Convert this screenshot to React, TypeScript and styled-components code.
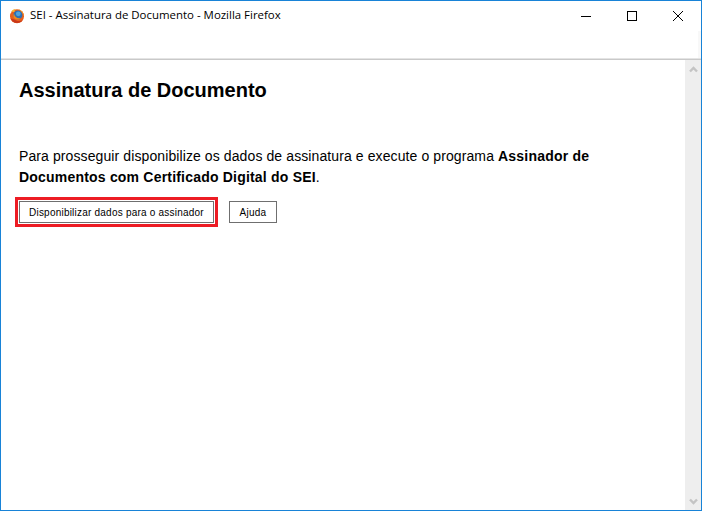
import React from "react";
import styled, { createGlobalStyle } from "styled-components";

const Global = createGlobalStyle`
  html, body { margin: 0; padding: 0; background: #fff; }
  #root { width: 702px; height: 511px; }
`;

const Win = styled.div`
  box-sizing: border-box;
  width: 702px;
  height: 511px;
  border: 1px solid #1883d7;
  display: flex;
  flex-direction: column;
  background: #fff;
  overflow: hidden;
`;

const TitleBar = styled.header`
  box-sizing: border-box;
  height: 59px;
  flex: none;
  display: flex;
  align-items: flex-start;
  border-bottom: 1px solid #c9c9c9;
  box-shadow: inset 0 -1px 0 #e4e4e4;
  background: linear-gradient(#f8f8f8, #f8f8f8) no-repeat right top 30px / 3px 27px;
`;

const TitleLabel = styled.div`
  display: flex;
  align-items: center;
  gap: 5px;
  padding: 7px 0 0 8px;
  flex: 1;
  font: 11.45px "Open Sans", "Noto Sans", sans-serif;
  color: #000;
  line-height: 16px;
`;

const TitleText = styled.span`
  margin-top: -2px;
`;

const WinButton = styled.div`
  width: 46px;
  height: 30px;
  display: flex;
  align-items: center;
  justify-content: center;
`;

const Body = styled.div`
  flex: 1;
  display: flex;
  min-height: 0;
`;

const Content = styled.main`
  flex: 1;
  padding: 17px 0 0 18px;
  font-family: "Liberation Sans", Arial, sans-serif;
  color: #000;
`;

const Heading = styled.h1`
  margin: 0;
  font-size: 20px;
  line-height: 26px;
  font-weight: 700;
`;

const Paragraph = styled.p`
  margin: 43px 0 0;
  width: 620px;
  font-size: 14px;
  line-height: 21px;
  letter-spacing: 0.1px;
`;

const Emphasis = styled.strong`
  letter-spacing: 0.2px;
`;

const Actions = styled.div`
  display: flex;
  align-items: center;
  gap: 11px;
  margin-top: 9px;
`;

const Highlight = styled.div`
  box-sizing: border-box;
  margin-left: -4px;
  border: 3px solid #ed1c24;
  padding: 1px;
  display: flex;
`;

const Button = styled.button`
  box-sizing: border-box;
  height: 22px;
  min-width: 48px;
  padding: 0 9px;
  background: #fff;
  border: 1px solid #6f6f6f;
  border-radius: 0;
  font: 10px "Liberation Sans", Arial, sans-serif;
  letter-spacing: 0.22px;
  color: #000;
`;

const Scrollbar = styled.aside`
  width: 16px;
  flex: none;
  background: #eeeeee;
  display: flex;
  flex-direction: column;
  justify-content: space-between;
  align-items: center;
  padding: 6px 0 5px;
  box-sizing: border-box;
`;

const Firefox = () => (
  <svg width="16" height="16" viewBox="0 0 16 16" aria-hidden="true">
    <circle cx="8" cy="8.2" r="7" fill="#e8601c" />
    <path d="M1.500 10.500C2.500 13.200 5 15 8 15c2.400 0 4.500-1.200 5.800-3-2 1.300-4.800 1.400-7 .2-2-1-3.500-1.600-5.300-1.700z" fill="#c9381a" />
    <circle cx="8.900" cy="6.900" r="4.500" fill="#2c6fb4" />
    <circle cx="9.300" cy="5.800" r="2.400" fill="#4fa3dc" />
    <path d="M5 5.500C5.500 8.500 8 10.800 11.500 10.300 10 11.800 7.500 12 5.800 10.800 4.300 9.700 4 7.300 5 5.500z" fill="#f08a1d" />
    <path d="M2.400 3.200C3.600 1.900 5.200 1.200 6.800 1.100 5.700 2 5.500 2.900 5.800 3.800 4.700 4 3.400 3.900 2.400 3.200z" fill="#f7b733" />
    <path d="M9 1.200c2.600.3 4.700 2 5.500 4.500.3 1 .4 2 .2 3-.3-2.700-1.800-5.300-5.700-7.500z" fill="#f39a24" />
  </svg>
);

const Minimize = () => (
  <svg width="10" height="10" viewBox="0 0 10 10" aria-hidden="true">
    <path d="M0 5.500h10" stroke="#000" strokeWidth="1" />
  </svg>
);
const Maximize = () => (
  <svg width="10" height="10" viewBox="0 0 10 10" aria-hidden="true">
    <rect x=".5" y=".5" width="9" height="9" fill="none" stroke="#000" strokeWidth="1" />
  </svg>
);
const Close = () => (
  <svg width="10" height="10" viewBox="0 0 10 10" aria-hidden="true">
    <path d="M0 0l10 10M10 0L0 10" stroke="#000" strokeWidth="1" />
  </svg>
);
const Chevron = ({ down }: { down?: boolean }) => (
  <svg width="9" height="7" viewBox="0 0 9 7" aria-hidden="true">
    <path d={down ? "M1 1.500l3.500 3.500L8 1.500" : "M1 5.500L4.500 2 8 5.500"} fill="none" stroke="#c4c4c4" strokeWidth="2.400" />
  </svg>
);

export default function App() {
  return (
    <Win>
      <Global />
      <TitleBar>
        <TitleLabel>
          <Firefox />
          <TitleText>SEI - Assinatura de Documento - Mozilla Firefox</TitleText>
        </TitleLabel>
        <WinButton><Minimize /></WinButton>
        <WinButton><Maximize /></WinButton>
        <WinButton><Close /></WinButton>
      </TitleBar>
      <Body>
        <Content>
          <Heading>Assinatura de Documento</Heading>
          <Paragraph>
            Para prosseguir disponibilize os dados de assinatura e execute o programa{" "}
            <Emphasis>Assinador de Documentos com Certificado Digital do SEI</Emphasis>.
          </Paragraph>
          <Actions>
            <Highlight>
              <Button>Disponibilizar dados para o assinador</Button>
            </Highlight>
            <Button>Ajuda</Button>
          </Actions>
        </Content>
        <Scrollbar>
          <Chevron />
          <Chevron down />
        </Scrollbar>
      </Body>
    </Win>
  );
}
